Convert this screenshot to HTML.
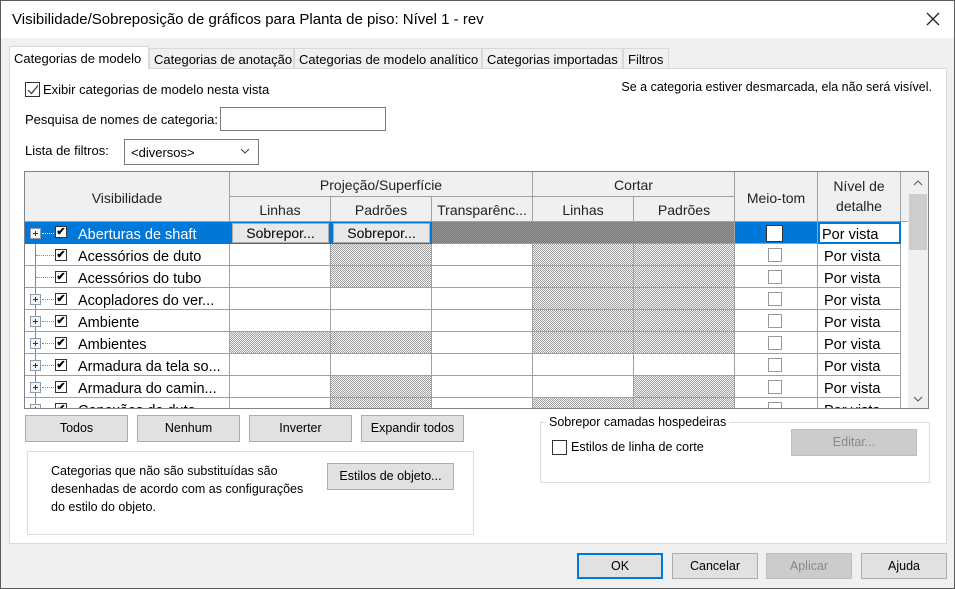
<!DOCTYPE html>
<html><head><meta charset="utf-8"><style>
*{box-sizing:border-box;margin:0;padding:0}
body{width:955px;height:589px;overflow:hidden;font-family:"Liberation Sans",sans-serif;font-size:12px;color:#000;background:#f0f0f0;position:relative}
.a{position:absolute}
.frame{left:0;top:0;width:955px;height:589px;border:1px solid #5a5a5a}
.title{left:1px;top:1px;width:953px;height:37px;background:#fff}
.panel{left:9px;top:68px;width:938px;height:476px;background:#fff;border:1px solid #d9d9d9}
.tab{top:48px;height:21px;border:1px solid #d9d9d9;background:#f0f0f0;padding:3px 4px 0;font-size:12.5px;white-space:nowrap}
.cb{width:13px;height:13px;border:1px solid #333;background:#fff}
.btn{height:27px;background:#e1e1e1;border:1px solid #adadad;text-align:center;line-height:25px;font-size:12.5px}
.hatch{background:repeating-conic-gradient(#a0a0a0 0 25%,#f4f4f4 0 50%) 0 0/2px 2px}
.hsel{background:repeating-conic-gradient(#5d7898 0 25%,#9a9a9a 0 50%) 0 0/2px 2px}
.c{border-right:1px solid #a0a0a0;border-bottom:1px solid #a0a0a0;height:22px}
.hd{background:#f0f0f0;border-right:1px solid #a0a0a0;border-bottom:1px solid #a0a0a0;text-align:center;font-size:14px;color:#222}
.nm{font-size:14.5px;left:78px}
.pv{font-size:14.5px;left:824px}
.mt{width:14px;height:14px;border:1px solid #999;background:#fff;left:768px}
.plus{width:11px;height:11px;border:1px solid #8a9ab0;background:#f4f4f4;left:30px}
.plus:before{content:"";position:absolute;left:2px;top:4px;width:5px;height:1px;background:#333}
.plus:after{content:"";position:absolute;left:4px;top:2px;width:1px;height:5px;background:#333}
.chk{width:12px;height:12px;border:1px solid #333;left:55px;font-size:11px;line-height:10px;text-align:center;font-weight:bold;background:#fff}
</style></head><body>
<div class="a frame"></div>
<div class="a title"></div>
<div class="a" style="left:12px;top:11px;font-size:15px">Visibilidade/Sobreposição de gráficos para Planta de piso: Nível 1 - rev</div>
<svg class="a" style="left:926px;top:12px" width="14" height="14"><path d="M1 1L13 13M13 1L1 13" stroke="#222" stroke-width="1.3"/></svg>
<div class="a panel"></div>
<div class="a tab" style="left:9px;top:46px;height:23px;width:140px;background:#fff;border-bottom:none;padding-top:4px;font-size:13px">Categorias de modelo</div>
<div class="a tab" style="left:149px;width:145px;font-size:13px">Categorias de anotação</div>
<div class="a tab" style="left:294px;width:188px;font-size:13px">Categorias de modelo analítico</div>
<div class="a tab" style="left:482px;width:141px;font-size:13px">Categorias importadas</div>
<div class="a tab" style="left:623px;width:46px;font-size:13px">Filtros</div>

<div class="a cb" style="left:25px;top:82px;width:15px;height:15px"></div>
<svg class="a" style="left:27px;top:84px" width="12" height="11"><path d="M1 6L4.5 9.5L11 1.5" stroke="#333" fill="none" stroke-width="1.2"/></svg>
<div class="a" style="left:43px;top:82px;font-size:13px">Exibir categorias de modelo nesta vista</div>
<div class="a" style="right:23px;top:80px;font-size:12.5px">Se a categoria estiver desmarcada, ela não será visível.</div>
<div class="a" style="left:25px;top:112px;font-size:13px">Pesquisa de nomes de categoria:</div>
<div class="a" style="left:220px;top:107px;width:166px;height:24px;border:1px solid #7a7a7a;background:#fff"></div>
<div class="a" style="left:25px;top:143px;font-size:13px">Lista de filtros:</div>
<div class="a" style="left:124px;top:139px;width:135px;height:26px;border:1px solid #7a7a7a;background:#fff;padding:5px 6px;font-size:13px">&lt;diversos&gt;</div>
<svg class="a" style="left:240px;top:148px" width="10" height="6"><path d="M1 1L5 5L9 1" stroke="#444" fill="none"/></svg>

<!-- grid -->
<div class="a" style="left:24px;top:171px;width:905px;height:238px;border:1px solid #828282;background:#fff"></div>
<div class="a hd" style="left:25px;top:172px;width:205px;height:50px;padding-top:18px">Visibilidade</div>
<div class="a hd" style="left:230px;top:172px;width:303px;height:25px;padding-top:5px">Projeção/Superfície</div>
<div class="a hd" style="left:533px;top:172px;width:202px;height:25px;padding-top:5px">Cortar</div>
<div class="a hd" style="left:230px;top:197px;width:101px;height:25px;padding-top:5px">Linhas</div>
<div class="a hd" style="left:331px;top:197px;width:101px;height:25px;padding-top:5px">Padrões</div>
<div class="a hd" style="left:432px;top:197px;width:101px;height:25px;padding-top:5px">Transparênc...</div>
<div class="a hd" style="left:533px;top:197px;width:101px;height:25px;padding-top:5px">Linhas</div>
<div class="a hd" style="left:634px;top:197px;width:101px;height:25px;padding-top:5px">Padrões</div>
<div class="a hd" style="left:735px;top:172px;width:83px;height:50px;padding-top:18px">Meio-tom</div>
<div class="a hd" style="left:818px;top:172px;width:83px;height:50px;padding-top:4px;line-height:20px">Nível de<br>detalhe</div>
<div class="a" style="left:901px;top:172px;width:7px;height:50px;background:#f0f0f0;border-bottom:1px solid #a0a0a0"></div>
<div class="a" style="left:908px;top:172px;width:20px;height:236px;background:#f0f0f0"></div>
<div class="a" style="left:909px;top:194px;width:18px;height:56px;background:#cdcdcd"></div>
<svg class="a" style="left:913px;top:180px" width="10" height="6"><path d="M1 5L5 1L9 5" stroke="#555" fill="none"/></svg>
<svg class="a" style="left:913px;top:396px" width="10" height="6"><path d="M1 1L5 5L9 1" stroke="#555" fill="none"/></svg>

<div class="a" style="left:25px;top:222px;width:883px;height:186px;overflow:hidden">
<div style="position:relative;left:-25px;top:-222px;width:955px;height:420px">
<div class="a" style="left:35px;top:233px;height:180px;border-left:1px dotted #888"></div>
<div class="a" style="left:25px;top:222px;width:876px;height:22px;background:#0078d7"></div>
<div class="a c hsel" style="left:432px;top:222px;width:303px"></div>
<div class="a c" style="left:735px;top:222px;width:83px;background:#0078d7"></div>
<div class="a" style="left:818px;top:222px;width:83px;height:22px;border:2px solid #0078d7;background:#fff"></div>
<div class="a btn" style="left:232px;top:223px;width:97px;height:20px;line-height:18px;font-size:14px;background:#e8e8e8">Sobrepor...</div>
<div class="a btn" style="left:333px;top:223px;width:97px;height:20px;line-height:18px;font-size:14px;background:#e8e8e8">Sobrepor...</div>
<div class="a" style="left:766px;top:225px;width:17px;height:17px;border:1px solid #333;background:#fff"></div>
<div class="a plus" style="top:228px"></div>
<div class="a" style="left:42px;top:233px;width:12px;border-top:1px dotted #fff"></div>
<div class="a chk" style="top:226px">✔</div>
<div class="a nm" style="top:227px;color:#fff">Aberturas de shaft</div>
<div class="a pv" style="top:227px;left:822px">Por vista</div>
</div></div>

<div class="a" style="left:25px;top:244px;width:883px;height:164px;overflow:hidden">
<div style="position:relative;left:-25px;top:-244px;width:955px;height:440px">
<div class="a" style="left:35px;top:244px;height:180px;border-left:1px dotted #888"></div>

<div class="a c" style="left:25px;top:244px;width:205px"></div>
<div class="a c" style="left:230px;top:244px;width:101px"></div>
<div class="a c hatch" style="left:331px;top:244px;width:101px"></div>
<div class="a c" style="left:432px;top:244px;width:101px"></div>
<div class="a c hatch" style="left:533px;top:244px;width:101px"></div>
<div class="a c hatch" style="left:634px;top:244px;width:101px"></div>
<div class="a c" style="left:735px;top:244px;width:83px"></div>
<div class="a c" style="left:818px;top:244px;width:83px"></div>
<div class="a" style="left:36px;top:255px;width:18px;border-top:1px dotted #888"></div>
<div class="a chk" style="top:249px">✔</div><div class="a nm" style="top:249px">Acessórios de duto</div>
<div class="a mt" style="top:248px"></div><div class="a pv" style="top:249px">Por vista</div>

<div class="a c" style="left:25px;top:266px;width:205px"></div>
<div class="a c" style="left:230px;top:266px;width:101px"></div>
<div class="a c hatch" style="left:331px;top:266px;width:101px"></div>
<div class="a c" style="left:432px;top:266px;width:101px"></div>
<div class="a c hatch" style="left:533px;top:266px;width:101px"></div>
<div class="a c hatch" style="left:634px;top:266px;width:101px"></div>
<div class="a c" style="left:735px;top:266px;width:83px"></div>
<div class="a c" style="left:818px;top:266px;width:83px"></div>
<div class="a" style="left:36px;top:277px;width:18px;border-top:1px dotted #888"></div>
<div class="a chk" style="top:271px">✔</div><div class="a nm" style="top:271px">Acessórios do tubo</div>
<div class="a mt" style="top:270px"></div><div class="a pv" style="top:271px">Por vista</div>

<div class="a c" style="left:25px;top:288px;width:205px"></div>
<div class="a c" style="left:230px;top:288px;width:101px"></div>
<div class="a c" style="left:331px;top:288px;width:101px"></div>
<div class="a c" style="left:432px;top:288px;width:101px"></div>
<div class="a c hatch" style="left:533px;top:288px;width:101px"></div>
<div class="a c hatch" style="left:634px;top:288px;width:101px"></div>
<div class="a c" style="left:735px;top:288px;width:83px"></div>
<div class="a c" style="left:818px;top:288px;width:83px"></div>
<div class="a plus" style="top:294px"></div><div class="a" style="left:42px;top:299px;width:12px;border-top:1px dotted #888"></div>
<div class="a chk" style="top:293px">✔</div><div class="a nm" style="top:293px">Acopladores do ver...</div>
<div class="a mt" style="top:292px"></div><div class="a pv" style="top:293px">Por vista</div>

<div class="a c" style="left:25px;top:310px;width:205px"></div>
<div class="a c" style="left:230px;top:310px;width:101px"></div>
<div class="a c" style="left:331px;top:310px;width:101px"></div>
<div class="a c" style="left:432px;top:310px;width:101px"></div>
<div class="a c hatch" style="left:533px;top:310px;width:101px"></div>
<div class="a c hatch" style="left:634px;top:310px;width:101px"></div>
<div class="a c" style="left:735px;top:310px;width:83px"></div>
<div class="a c" style="left:818px;top:310px;width:83px"></div>
<div class="a plus" style="top:316px"></div><div class="a" style="left:42px;top:321px;width:12px;border-top:1px dotted #888"></div>
<div class="a chk" style="top:315px">✔</div><div class="a nm" style="top:315px">Ambiente</div>
<div class="a mt" style="top:314px"></div><div class="a pv" style="top:315px">Por vista</div>

<div class="a c" style="left:25px;top:332px;width:205px"></div>
<div class="a c hatch" style="left:230px;top:332px;width:101px"></div>
<div class="a c hatch" style="left:331px;top:332px;width:101px"></div>
<div class="a c" style="left:432px;top:332px;width:101px"></div>
<div class="a c hatch" style="left:533px;top:332px;width:101px"></div>
<div class="a c hatch" style="left:634px;top:332px;width:101px"></div>
<div class="a c" style="left:735px;top:332px;width:83px"></div>
<div class="a c" style="left:818px;top:332px;width:83px"></div>
<div class="a plus" style="top:338px"></div><div class="a" style="left:42px;top:343px;width:12px;border-top:1px dotted #888"></div>
<div class="a chk" style="top:337px">✔</div><div class="a nm" style="top:337px">Ambientes</div>
<div class="a mt" style="top:336px"></div><div class="a pv" style="top:337px">Por vista</div>

<div class="a c" style="left:25px;top:354px;width:205px"></div>
<div class="a c" style="left:230px;top:354px;width:101px"></div>
<div class="a c" style="left:331px;top:354px;width:101px"></div>
<div class="a c" style="left:432px;top:354px;width:101px"></div>
<div class="a c" style="left:533px;top:354px;width:101px"></div>
<div class="a c" style="left:634px;top:354px;width:101px"></div>
<div class="a c" style="left:735px;top:354px;width:83px"></div>
<div class="a c" style="left:818px;top:354px;width:83px"></div>
<div class="a plus" style="top:360px"></div><div class="a" style="left:42px;top:365px;width:12px;border-top:1px dotted #888"></div>
<div class="a chk" style="top:359px">✔</div><div class="a nm" style="top:359px">Armadura da tela so...</div>
<div class="a mt" style="top:358px"></div><div class="a pv" style="top:359px">Por vista</div>

<div class="a c" style="left:25px;top:376px;width:205px"></div>
<div class="a c" style="left:230px;top:376px;width:101px"></div>
<div class="a c hatch" style="left:331px;top:376px;width:101px"></div>
<div class="a c" style="left:432px;top:376px;width:101px"></div>
<div class="a c" style="left:533px;top:376px;width:101px"></div>
<div class="a c hatch" style="left:634px;top:376px;width:101px"></div>
<div class="a c" style="left:735px;top:376px;width:83px"></div>
<div class="a c" style="left:818px;top:376px;width:83px"></div>
<div class="a plus" style="top:382px"></div><div class="a" style="left:42px;top:387px;width:12px;border-top:1px dotted #888"></div>
<div class="a chk" style="top:381px">✔</div><div class="a nm" style="top:381px">Armadura do camin...</div>
<div class="a mt" style="top:380px"></div><div class="a pv" style="top:381px">Por vista</div>

<div class="a c" style="left:25px;top:398px;width:205px"></div>
<div class="a c" style="left:230px;top:398px;width:101px"></div>
<div class="a c hatch" style="left:331px;top:398px;width:101px"></div>
<div class="a c" style="left:432px;top:398px;width:101px"></div>
<div class="a c hatch" style="left:533px;top:398px;width:101px"></div>
<div class="a c hatch" style="left:634px;top:398px;width:101px"></div>
<div class="a c" style="left:735px;top:398px;width:83px"></div>
<div class="a c" style="left:818px;top:398px;width:83px"></div>
<div class="a plus" style="top:404px"></div>
<div class="a chk" style="top:403px">✔</div><div class="a nm" style="top:403px">Conexões de duto</div>
<div class="a mt" style="top:402px"></div><div class="a pv" style="top:403px">Por vista</div>
</div></div>

<div class="a btn" style="left:25px;top:415px;width:103px">Todos</div>
<div class="a btn" style="left:137px;top:415px;width:103px">Nenhum</div>
<div class="a btn" style="left:249px;top:415px;width:103px">Inverter</div>
<div class="a btn" style="left:361px;top:415px;width:103px">Expandir todos</div>

<div class="a" style="left:27px;top:451px;width:447px;height:84px;border:1px solid #dcdcdc"></div>
<div class="a" style="left:51px;top:462px;font-size:12.5px;line-height:18px">Categorias que não são substituídas são<br>desenhadas de acordo com as configurações<br>do estilo do objeto.</div>
<div class="a btn" style="left:327px;top:463px;width:127px">Estilos de objeto...</div>

<div class="a" style="left:540px;top:422px;width:390px;height:61px;border:1px solid #dcdcdc"></div>
<div class="a" style="left:546px;top:415px;background:#fff;padding:0 3px;font-size:12.5px">Sobrepor camadas hospedeiras</div>
<div class="a cb" style="left:552px;top:440px;width:15px;height:15px"></div>
<div class="a" style="left:571px;top:440px;font-size:12.5px">Estilos de linha de corte</div>
<div class="a btn" style="left:791px;top:429px;width:126px;background:#cccccc;border-color:#bfbfbf;color:#888">Editar...</div>

<div class="a btn" style="left:577px;top:553px;width:86px;height:26px;border:2px solid #0078d7;line-height:22px">OK</div>
<div class="a btn" style="left:672px;top:553px;width:86px;height:26px;line-height:24px">Cancelar</div>
<div class="a btn" style="left:766px;top:553px;width:86px;height:26px;line-height:24px;background:#ccc;border-color:#bfbfbf;color:#888">Aplicar</div>
<div class="a btn" style="left:861px;top:553px;width:86px;height:26px;line-height:24px">Ajuda</div>
</body></html>
